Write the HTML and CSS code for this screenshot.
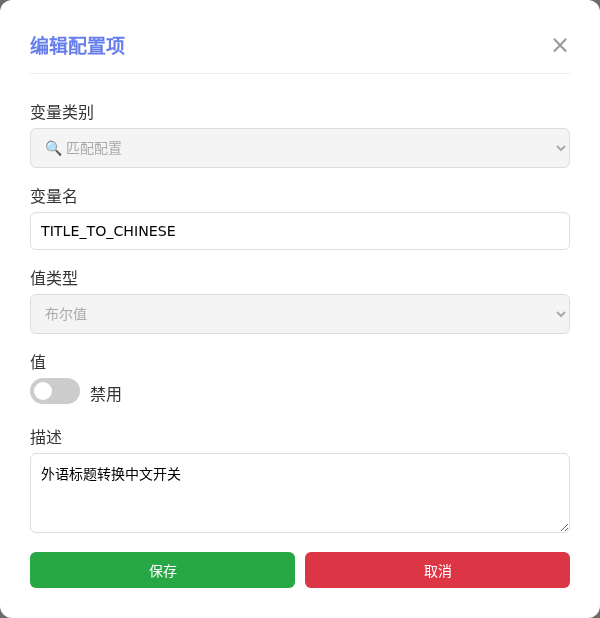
FILE: index.html
```html
<!DOCTYPE html>
<html lang="zh-CN">

<head>
    <meta charset="UTF-8">
    <meta name="viewport" content="width=device-width, initial-scale=1.0">
    <title>编辑配置项</title>
    <link rel="stylesheet" href="styles.css">
</head>

<body>
    <div class="modal">
        <div class="modal-head">
            <h3 class="modal-title">编辑配置项</h3>
            <span class="modal-close">&times;</span>
        </div>
        <form class="modal-form">
            <div class="field">
                <label class="field-label">变量类别</label>
                <select class="control control-select" disabled>
                    <option>🔍 匹配配置</option>
                </select>
            </div>
            <div class="field">
                <label class="field-label">变量名</label>
                <input class="control control-input" type="text" value="TITLE_TO_CHINESE">
            </div>
            <div class="field">
                <label class="field-label">值类型</label>
                <select class="control control-select" disabled>
                    <option>布尔值</option>
                </select>
            </div>
            <div class="field">
                <label class="field-label">值</label>
                <div class="switch-row">
                    <span class="switch"><span class="switch-knob"></span></span>
                    <span class="switch-text">禁用</span>
                </div>
            </div>
            <div class="field">
                <label class="field-label">描述</label>
                <textarea class="control control-area">外语标题转换中文开关</textarea>
            </div>
            <div class="actions">
                <button class="btn btn-save" type="button">保存</button>
                <button class="btn btn-cancel" type="button">取消</button>
            </div>
        </form>
    </div>
</body>

</html>
```

FILE: styles.css
```css
* {
    box-sizing: border-box;
    padding: 0;
    margin: 0;
}

html,
body {
    width: 600px;
    height: 618px;
    overflow: hidden;
}

body {
    background: #6b6b6b;
    font-family: "DejaVu Sans", sans-serif;
    color: #333;
}

.modal {
    height: 618px;
    padding: 30px;
    background: #fff;
    border-radius: 12px;
    transform: translateZ(0);
    will-change: transform;
}

.modal-head {
    display: flex;
    justify-content: space-between;
    align-items: center;
    height: 44px;
    padding-bottom: 15px;
    border-bottom: 1px solid #eee;
}

.modal-title {
    font-size: 19px;
    font-weight: 700;
    color: #667eea;
}

.modal-close {
    margin-top: 2px;
    font-size: 24px;
    line-height: 24px;
    color: #999;
}

.modal-form {
    margin-top: 29px;
}

.field {
    margin-bottom: 19px;
}

.field-label {
    display: block;
    margin-bottom: 5px;
    font-size: 16px;
    line-height: 20px;
    color: #333;
}

.control {
    display: block;
    width: 100%;
    padding: 10px;
    font-family: inherit;
    font-size: 14px;
    color: #000;
    background: #fff;
    border: 1px solid #ddd;
    border-radius: 6px;
}

.control-select {
    height: 40px;
}

.control-select:disabled {
    color: #aaa;
    background-color: #f4f4f4;
    opacity: 1;
}

.control-input {
    height: 38px;
    font-size: 14.2px;
}

.control-area {
    height: 80px;
    padding-top: 9px;
    resize: vertical;
}

.switch-row {
    display: flex;
    gap: 10px;
    height: 31px;
}

.switch {
    position: relative;
    display: block;
    width: 50px;
    height: 26px;
    background: #ccc;
    border-radius: 13px;
}

.switch-knob {
    position: absolute;
    left: 4px;
    top: 4px;
    width: 18px;
    height: 18px;
    background: #fff;
    border-radius: 50%;
}

.switch-text {
    margin-top: 7px;
    font-size: 16px;
    line-height: 20px;
}

.actions {
    display: flex;
    gap: 10px;
}

.btn {
    flex: 1;
    height: 36px;
    font-family: inherit;
    font-size: 14px;
    color: #fff;
    border: none;
    border-radius: 6px;
}

.btn-save {
    background: #28a745;
}

.btn-cancel {
    background: #dc3545;
}
```
